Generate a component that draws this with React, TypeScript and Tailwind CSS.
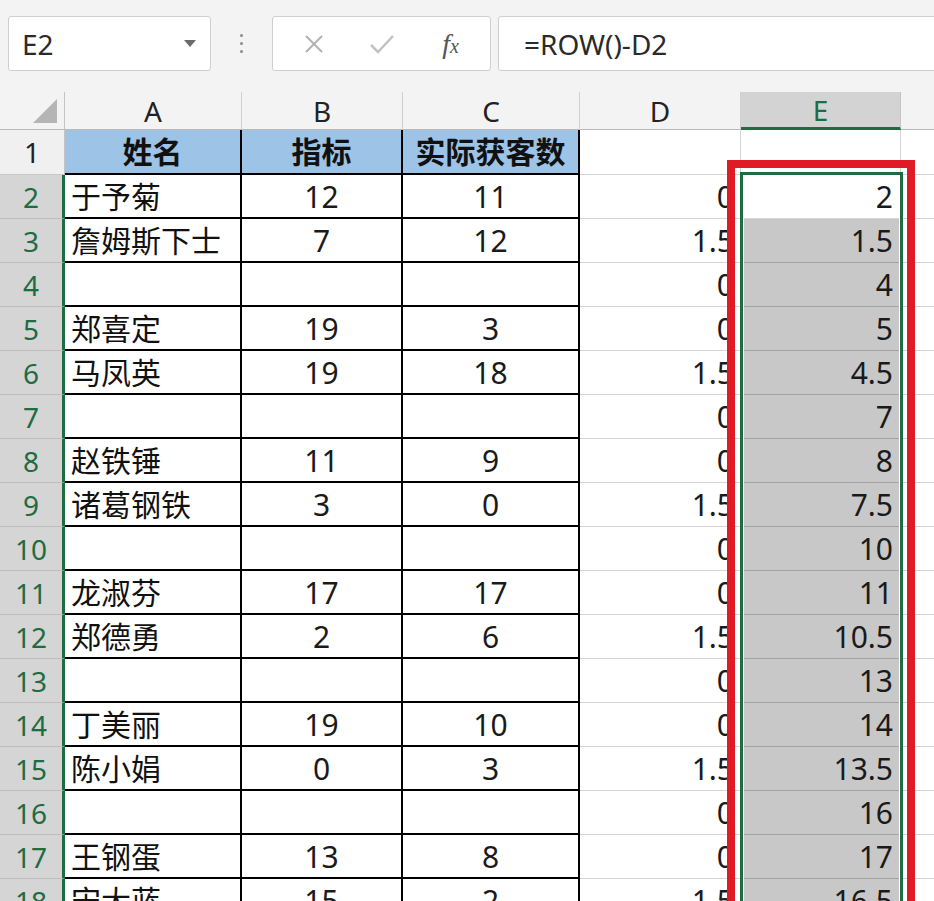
import React from 'react';

type Row = { n: number; name: string; b: string; c: string; d: string; e: string };

const rows: Row[] = [
    { n: 2, name: '于予菊', b: '12', c: '11', d: '0', e: '2' },
    { n: 3, name: '詹姆斯下士', b: '7', c: '12', d: '1.5', e: '1.5' },
    { n: 4, name: '', b: '', c: '', d: '0', e: '4' },
    { n: 5, name: '郑喜定', b: '19', c: '3', d: '0', e: '5' },
    { n: 6, name: '马凤英', b: '19', c: '18', d: '1.5', e: '4.5' },
    { n: 7, name: '', b: '', c: '', d: '0', e: '7' },
    { n: 8, name: '赵铁锤', b: '11', c: '9', d: '0', e: '8' },
    { n: 9, name: '诸葛钢铁', b: '3', c: '0', d: '1.5', e: '7.5' },
    { n: 10, name: '', b: '', c: '', d: '0', e: '10' },
    { n: 11, name: '龙淑芬', b: '17', c: '17', d: '0', e: '11' },
    { n: 12, name: '郑德勇', b: '2', c: '6', d: '1.5', e: '10.5' },
    { n: 13, name: '', b: '', c: '', d: '0', e: '13' },
    { n: 14, name: '丁美丽', b: '19', c: '10', d: '0', e: '14' },
    { n: 15, name: '陈小娟', b: '0', c: '3', d: '1.5', e: '13.5' },
    { n: 16, name: '', b: '', c: '', d: '0', e: '16' },
    { n: 17, name: '王钢蛋', b: '13', c: '8', d: '0', e: '17' },
    { n: 18, name: '宋大蓝', b: '15', c: '2', d: '1.5', e: '16.5' },
];

const FONT = { fontFamily: '"Noto Sans", "Noto Sans CJK SC", sans-serif' };

function Toolbar() {
    return (
        <div className="h-[92px] flex items-start pt-[16px] pl-[8px] overflow-hidden">
            {/* Name box */}
            <div className="shrink-0 w-[203px] h-[55px] bg-white border border-[#cfcfcf] rounded-[3px] flex items-center pl-[13px] pr-[14px] justify-between">
                <span className="text-[28px] text-[#2a2a2a] leading-none">E2</span>
                <svg width="12" height="7" viewBox="0 0 12 7">
                    <path d="M0 0 L12 0 L6 7 Z" fill="#6b6b6b" />
                </svg>
            </div>
            {/* Grip dots */}
            <div className="shrink-0 w-[61px] h-[55px] flex flex-col items-center justify-center gap-[5px]">
                <span className="w-[3px] h-[3px] rounded-full bg-[#8a8a8a]" />
                <span className="w-[3px] h-[3px] rounded-full bg-[#8a8a8a]" />
                <span className="w-[3px] h-[3px] rounded-full bg-[#8a8a8a]" />
            </div>
            {/* Cancel / enter / fx */}
            <div className="shrink-0 w-[219px] h-[55px] bg-white border border-[#cfcfcf] rounded-[3px] flex items-center">
                <div className="w-[76px] flex justify-center pl-[6px]">
                    <svg width="22" height="22" viewBox="0 0 22 22">
                        <path d="M3 3 L19 19 M19 3 L3 19" stroke="#b3b3b3" strokeWidth="2" />
                    </svg>
                </div>
                <div className="w-[66px] flex justify-center">
                    <svg width="26" height="22" viewBox="0 0 26 22">
                        <path d="M2 12 L9 19 L24 3" stroke="#c2c2c2" strokeWidth="2.5" fill="none" />
                    </svg>
                </div>
                <div className="flex-1 flex justify-center pr-[4px]">
                    <span className="text-[28px] italic text-[#555] leading-none" style={{ fontFamily: '"Liberation Serif", serif' }}>
                        f<span className="text-[20px]">x</span>
                    </span>
                </div>
            </div>
            {/* Formula */}
            <div className="shrink-0 ml-[7px] w-[460px] h-[55px] bg-white border border-[#cfcfcf] rounded-[3px] flex items-center pl-[25px]">
                <span className="text-[28px] text-[#2a2a2a] leading-none">=ROW()-D2</span>
            </div>
        </div>
    );
}

function ColHeader({ label, active }: { label: string; active?: boolean }) {
    return active ? (
        <div className="bg-[#d3d3d3] border-r border-[#c4c4c4] border-b-[3px] border-b-[#1f6b42] flex items-center justify-center text-[28px] text-[#1f6b42]">
            {label}
        </div>
    ) : (
        <div className="border-r border-[#d0d0d0] border-b border-b-[#b9b9b9] flex items-center justify-center text-[28px] text-[#222]">
            {label}
        </div>
    );
}

export default function App() {
    return (
        <div className="w-[934px] h-[901px] overflow-hidden bg-[#f3f3f3]" style={FONT}>
            <Toolbar />

            <div className="relative h-[809px] overflow-hidden">
                <div className="grid grid-cols-[65px_177px_161px_177px_161px_160px_33px] grid-rows-[38px_45px] auto-rows-[44px]">
                    {/* Header row */}
                    <div className="border-r border-[#c4c4c4] border-b border-b-[#b9b9b9] flex items-end justify-end pr-[7px] pb-[6px]">
                        <svg width="24" height="24" viewBox="0 0 24 24">
                            <path d="M24 0 L24 24 L0 24 Z" fill="#b5b5b5" />
                        </svg>
                    </div>
                    <ColHeader label="A" />
                    <ColHeader label="B" />
                    <ColHeader label="C" />
                    <ColHeader label="D" />
                    <ColHeader label="E" active />
                    <div className="border-b border-b-[#b9b9b9]" />

                    {/* Row 1 */}
                    <div className="bg-[#f0f0f0] border-r border-[#c4c4c4] border-b border-b-[#c8c8c8] flex items-center justify-center text-[28px] text-[#222]">
                        1
                    </div>
                    <div className="bg-[#9dc3e6] border-r-2 border-b-2 border-black flex items-center justify-center text-[30px] font-bold text-[#111]">
                        姓名
                    </div>
                    <div className="bg-[#9dc3e6] border-r-2 border-b-2 border-black flex items-center justify-center text-[30px] font-bold text-[#111]">
                        指标
                    </div>
                    <div className="bg-[#9dc3e6] border-r-2 border-b-2 border-black flex items-center justify-center text-[30px] font-bold text-[#111]">
                        实际获客数
                    </div>
                    <div className="bg-white border-r border-b border-[#d4d4d4]" />
                    <div className="bg-white border-r border-b border-[#d4d4d4]" />
                    <div className="bg-white border-b border-[#d4d4d4]" />

                    {rows.map((r) => (
                        <React.Fragment key={r.n}>
                            <div className="bg-[#d5d5d5] border-r-[3px] border-r-[#1f6b42] border-b border-b-[#bdbdbd] flex items-center justify-center text-[28px] text-[#1f6b42]">
                                {r.n}
                            </div>
                            <div className="bg-white border-r-2 border-b-2 border-black flex items-center pl-[6px] text-[30px] text-[#111] whitespace-nowrap">
                                {r.name}
                            </div>
                            <div className="bg-white border-r-2 border-b-2 border-black flex items-center justify-center text-[30px] text-[#1a1a1a]">
                                {r.b}
                            </div>
                            <div className="bg-white border-r-2 border-b-2 border-black flex items-center justify-center text-[30px] text-[#1a1a1a]">
                                {r.c}
                            </div>
                            <div className="bg-white border-r border-b border-[#d4d4d4] flex items-center justify-end pr-[6px] text-[30px] text-[#1a1a1a]">
                                {r.d}
                            </div>
                            {r.n === 2 ? (
                                <div className="bg-white border-b border-[#d4d4d4] flex items-center justify-end pr-[8px] text-[30px] text-[#1a1a1a]">
                                    {r.e}
                                </div>
                            ) : (
                                <div className="bg-[#c8c8c8] border-b border-[#a3a3a3] flex items-center justify-end pr-[8px] text-[30px] text-[#1a1a1a]">
                                    {r.e}
                                </div>
                            )}
                            <div className="bg-white border-l border-b border-[#d4d4d4]" />
                        </React.Fragment>
                    ))}
                </div>

                {/* Selection border E2:E18 */}
                <div className="absolute left-[740px] top-[80px] w-[163px] h-[760px] border-[3px] border-[#1f6b42] shadow-[inset_0_0_0_1px_#ffffff] pointer-events-none" />

                {/* Red annotation box */}
                <div className="absolute left-[727px] top-[68px] w-[188px] h-[780px] border-[8px] border-[#e11b25] pointer-events-none" />
            </div>
        </div>
    );
}
